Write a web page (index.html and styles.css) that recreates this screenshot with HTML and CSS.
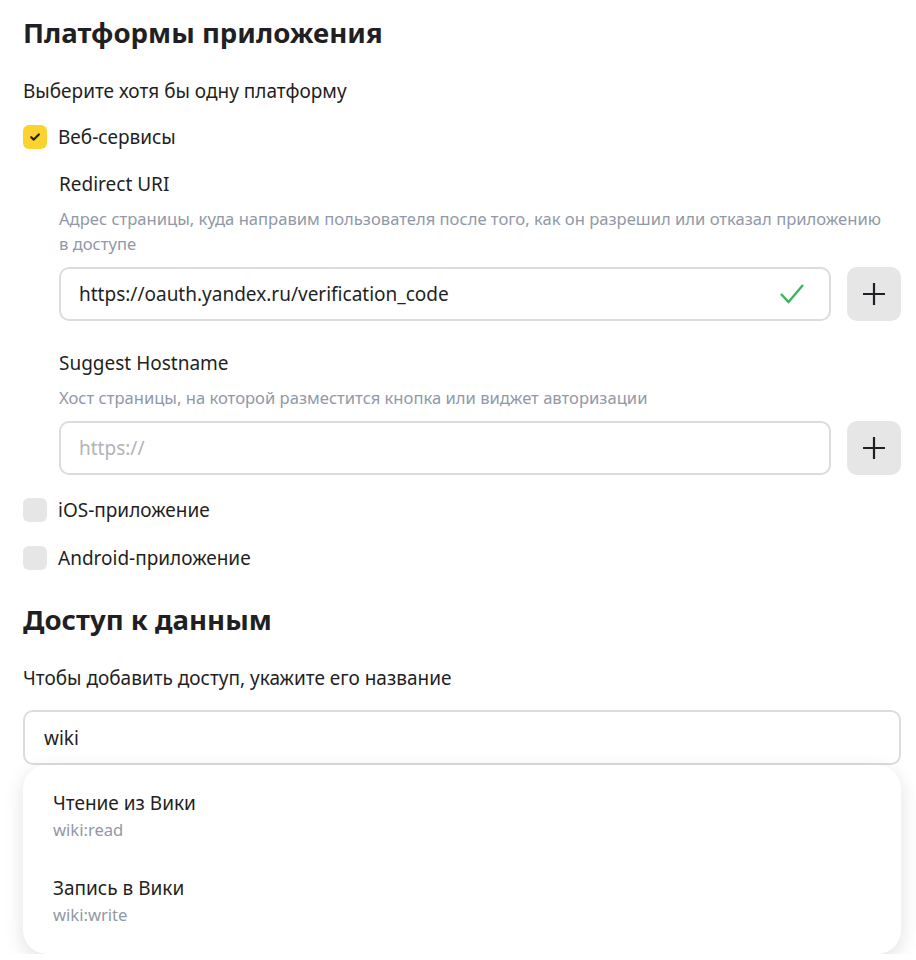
FILE: index.html
```html
<!DOCTYPE html>
<html lang="ru">
<head>
    <meta charset="UTF-8">
    <title>Платформы приложения</title>
    <link rel="stylesheet" href="styles.css">
</head>
<body>
    <div class="page">
        <h2 class="title">Платформы приложения</h2>
        <p class="lead">Выберите хотя бы одну платформу</p>

        <label class="check check-web">
            <span class="box box-on">
                <svg width="14" height="14" viewBox="0 0 14 14"><path d="M3.2 7.2 L5.8 9.6 L10.8 4.4" fill="none" stroke="#1f1f24" stroke-width="2.2" stroke-linecap="round" stroke-linejoin="round"/></svg>
            </span>
            Веб-сервисы
        </label>

        <div class="platform">
            <div class="field">
                <div class="field-name">Redirect URI</div>
                <div class="field-hint">Адрес страницы, куда направим пользователя после того, как он разрешил или отказал приложению в доступе</div>
                <div class="row">
                    <div class="input">
                        <span class="value">https://oauth.yandex.ru/verification_code</span>
                        <svg class="ok" width="26" height="22" viewBox="0 0 26 22"><path d="M2 11 L9.5 19 L24 2" fill="none" stroke="#3bb361" stroke-width="2.4"/></svg>
                    </div>
                    <button class="add" type="button">
                        <svg width="24" height="24" viewBox="0 0 24 24"><path d="M12 1v22M1 12h22" stroke="#1f1f24" stroke-width="2.2"/></svg>
                    </button>
                </div>
            </div>

            <div class="field">
                <div class="field-name">Suggest Hostname</div>
                <div class="field-hint">Хост страницы, на которой разместится кнопка или виджет авторизации</div>
                <div class="row">
                    <div class="input">
                        <span class="placeholder">https://</span>
                    </div>
                    <button class="add" type="button">
                        <svg width="24" height="24" viewBox="0 0 24 24"><path d="M12 1v22M1 12h22" stroke="#1f1f24" stroke-width="2.2"/></svg>
                    </button>
                </div>
            </div>
        </div>

        <label class="check check-ios">
            <span class="box"></span>
            iOS-приложение
        </label>
        <label class="check check-android">
            <span class="box"></span>
            Android-приложение
        </label>

        <h2 class="title title-second">Доступ к данным</h2>
        <p class="lead">Чтобы добавить доступ, укажите его название</p>

        <div class="search">
            <div class="input input-wide">
                <span class="value">wiki</span>
            </div>
            <div class="popup">
                <div class="option">
                    <div class="option-name">Чтение из Вики</div>
                    <div class="option-code">wiki:read</div>
                </div>
                <div class="option">
                    <div class="option-name">Запись в Вики</div>
                    <div class="option-code">wiki:write</div>
                </div>
            </div>
        </div>
    </div>
</body>
</html>
```

FILE: styles.css
```css
body {
    margin: 0;
    font-family: 'Noto Sans', Roboto, Arial, sans-serif;
    color: #1f1f24;
    background: #fff;
}
.page {
    padding: 12px 15px 0 23px;
}
.title {
    margin: 0;
    font-size: 27.6px;
    font-weight: 700;
    line-height: 40px;
}
.title-second {
    margin-top: 29px;
}
.lead {
    margin: 27px 0 0;
    font-size: 19px;
    line-height: 24px;
}
.check {
    display: flex;
    align-items: center;
    gap: 11px;
    font-size: 19px;
    line-height: 24px;
}
.check-web {
    margin-top: 22px;
}
.check-ios {
    margin-top: 23px;
}
.check-android {
    margin-top: 24px;
}
.box {
    width: 24px;
    height: 24px;
    border-radius: 6px;
    background: #e6e6e6;
    display: flex;
    align-items: center;
    justify-content: center;
    flex: none;
}
.box-on {
    background: #fcd22f;
}
.platform {
    padding-left: 36px;
}
.field {
    margin-top: 23px;
}
.field + .field {
    margin-top: 30px;
}
.field-name {
    font-size: 19px;
    line-height: 24px;
}
.field-hint {
    margin-top: 10px;
    padding-right: 16px;
    font-size: 16.6px;
    line-height: 25px;
    color: #9198a8;
}
.row {
    display: flex;
    gap: 16px;
    margin-top: 11px;
}
.input {
    flex: 1;
    height: 54px;
    box-sizing: border-box;
    border: 2px solid #dcdcdc;
    border-radius: 10px;
    display: flex;
    align-items: center;
    justify-content: space-between;
    padding: 0 24px 0 18px;
    font-size: 19px;
}
.placeholder {
    color: #b3b3b8;
}
.add {
    width: 54px;
    height: 54px;
    border: 0;
    border-radius: 10px;
    background: #e6e6e6;
    display: flex;
    align-items: center;
    justify-content: center;
    padding: 0;
}
.search {
    margin-top: 20px;
}
.input-wide {
    flex: none;
    height: 55px;
    padding-left: 19px;
}
.popup {
    background: #fff;
    border-radius: 24px;
    box-shadow: 0 6px 20px rgba(0, 0, 0, 0.12);
    padding: 25px 30px 27px;
}
.option + .option {
    margin-top: 33px;
}
.option-name {
    font-size: 19px;
    line-height: 27px;
}
.option-code {
    font-size: 16.6px;
    line-height: 25px;
    color: #9198a8;
}
```
